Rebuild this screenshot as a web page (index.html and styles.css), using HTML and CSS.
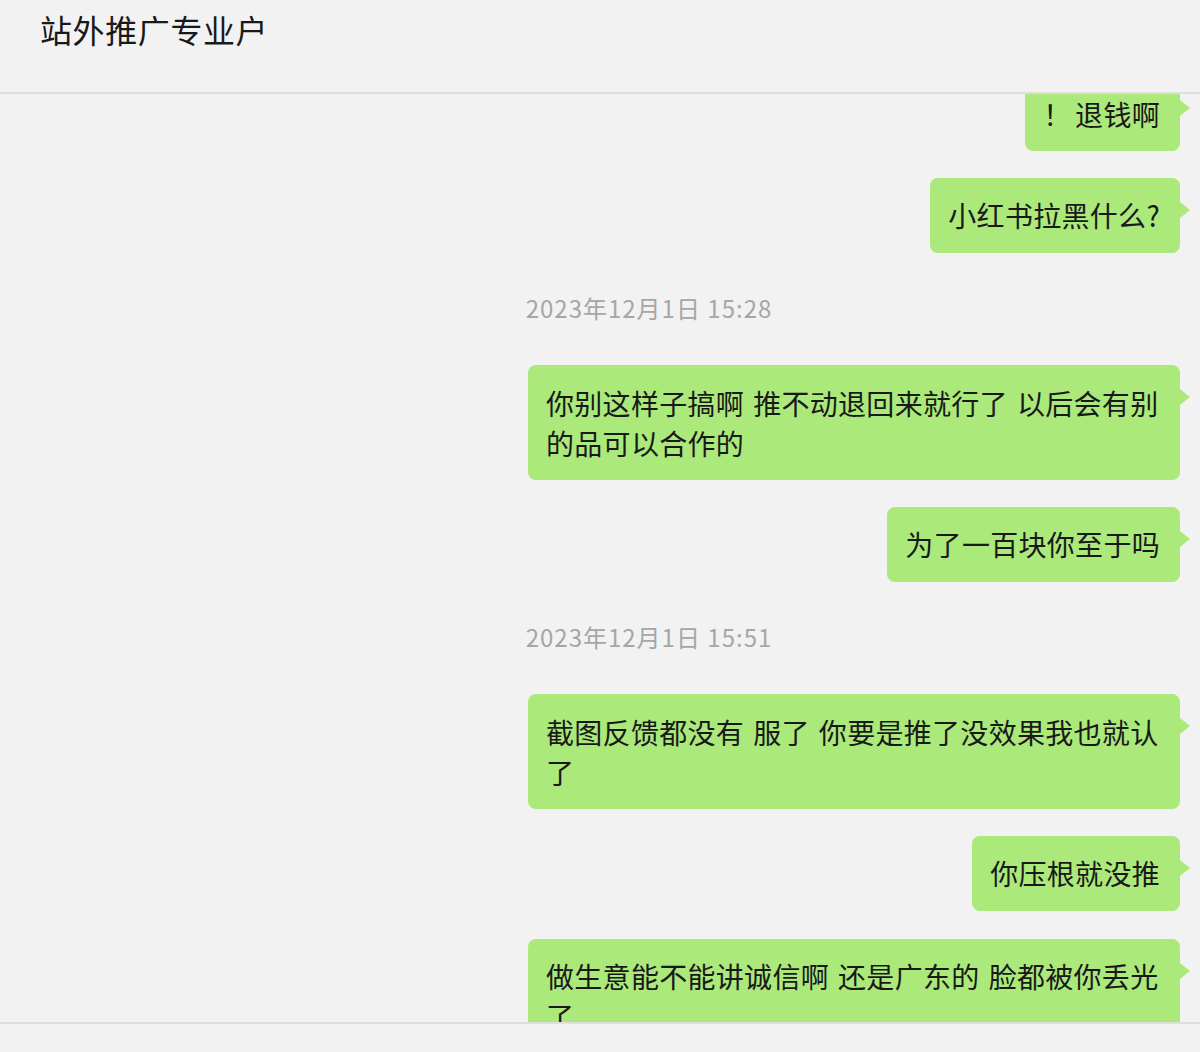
FILE: index.html
```html
<!DOCTYPE html>
<html lang="zh-CN">
<head>
    <meta charset="UTF-8">
    <meta name="viewport" content="width=device-width, initial-scale=1.0">
    <title>站外推广专业户</title>
    <link rel="stylesheet" href="styles.css">
</head>
<body>
    <div class="chat">
        <div class="chat-header">站外推广专业户</div>

        <div class="chat-body">
            <div class="message-list">
                <div class="msg"><div class="bubble bubble-tight">！ 退钱啊</div></div>
                <div class="msg"><div class="bubble">小红书拉黑什么?</div></div>

                <div class="time">2023年12月1日 15:28</div>

                <div class="msg"><div class="bubble">你别这样子搞啊 推不动退回来就行了 以后会有别的品可以合作的</div></div>
                <div class="msg"><div class="bubble">为了一百块你至于吗</div></div>

                <div class="time">2023年12月1日 15:51</div>

                <div class="msg"><div class="bubble">截图反馈都没有 服了 你要是推了没效果我也就认了</div></div>
                <div class="msg"><div class="bubble">你压根就没推</div></div>
                <div class="msg msg-last"><div class="bubble">做生意能不能讲诚信啊 还是广东的 脸都被你丢光了</div></div>
            </div>
        </div>

        <div class="chat-footer"></div>
    </div>
</body>
</html>
```

FILE: styles.css
```css
html, body {
    margin: 0;
    padding: 0;
}
body {
    font-family: "Noto Sans CJK SC", "Noto Sans", sans-serif;
    background-color: #f2f2f2;
    color: #191919;
}
.chat {
    display: flex;
    flex-direction: column;
    height: 1052px;
}
.chat-header {
    height: 82px;
    padding: 10px 0 0 40px;
    font-size: 32px;
    line-height: 38px;
    letter-spacing: 0.6px;
    border-bottom: 2px solid #dedede;
    flex-shrink: 0;
}
.chat-body {
    flex: 1;
    overflow: hidden;
    border-bottom: 2px solid #dedede;
}
.message-list {
    display: flex;
    flex-direction: column;
    gap: 26.7px;
    margin-top: -18px;
    padding-left: 98px;
}
.msg {
    display: flex;
    justify-content: flex-end;
    padding-right: 20px;
}
.msg-last {
    margin-top: 1px;
}
.bubble {
    position: relative;
    max-width: 652px;
    box-sizing: border-box;
    padding: 17.5px 20px 17.5px 18px;
    background-color: #abe97b;
    border-radius: 8px;
    font-size: 28px;
    line-height: 40px;
    letter-spacing: 0.3px;
    word-spacing: 2.5px;
}
.bubble-tight {
    word-spacing: -3px;
}
.bubble::after {
    content: "";
    position: absolute;
    right: -10px;
    top: 24px;
    border-left: 10px solid #abe97b;
    border-top: 8px solid transparent;
    border-bottom: 8px solid transparent;
}
.time {
    margin: 13px 0 14px;
    text-align: center;
    font-size: 24px;
    line-height: 32px;
    letter-spacing: 1px;
    color: #a6a6a6;
}
.chat-footer {
    height: 28px;
    flex-shrink: 0;
}
```
